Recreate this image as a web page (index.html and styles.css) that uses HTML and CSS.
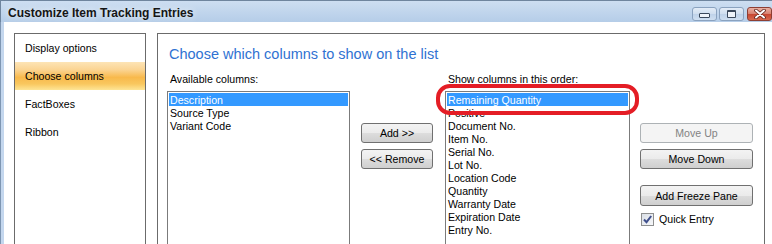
FILE: index.html
```html
<!DOCTYPE html>
<html>
<head>
<meta charset="utf-8">
<title>Customize Item Tracking Entries</title>
<link rel="stylesheet" href="styles.css">
</head>
<body>
<div class="window">
  <div class="titlebar">
    <span class="title">Customize Item Tracking Entries</span>
    <div class="caption-buttons">
      <span class="cbtn cbtn-min"><span class="min-glyph"></span></span>
      <span class="cbtn cbtn-max"><span class="max-glyph"></span></span>
      <span class="cbtn cbtn-close">
        <svg width="12" height="10" viewBox="0 0 12 10">
          <path d="M2 1.5 L10 8.5 M10 1.5 L2 8.5" stroke="#5b2219" stroke-width="3.6" stroke-linecap="round"/>
          <path d="M2 1.5 L10 8.5 M10 1.5 L2 8.5" stroke="#ffffff" stroke-width="2" stroke-linecap="round"/>
        </svg>
      </span>
    </div>
  </div>
  <div class="client">
    <ul class="nav">
      <li class="nav-item">Display options</li>
      <li class="nav-item active">Choose columns</li>
      <li class="nav-item">FactBoxes</li>
      <li class="nav-item">Ribbon</li>
    </ul>
    <section class="panel">
      <h1 class="heading">Choose which columns to show on the list</h1>
      <div class="columns">
        <div class="col col-avail">
          <div class="label">Available columns:</div>
          <div class="listbox">
            <div class="item selected">Description</div>
            <div class="item">Source Type</div>
            <div class="item">Variant Code</div>
          </div>
        </div>
        <div class="col col-mid">
          <button class="btn">Add &gt;&gt;</button>
          <button class="btn">&lt;&lt; Remove</button>
        </div>
        <div class="col col-order">
          <div class="label">Show columns in this order:</div>
          <div class="listbox listbox-order">
            <div class="item selected">Remaining Quantity</div>
            <div class="item">Positive</div>
            <div class="item">Document No.</div>
            <div class="item">Item No.</div>
            <div class="item">Serial No.</div>
            <div class="item">Lot No.</div>
            <div class="item">Location Code</div>
            <div class="item">Quantity</div>
            <div class="item">Warranty Date</div>
            <div class="item">Expiration Date</div>
            <div class="item">Entry No.</div>
          </div>
          <div class="ring"></div>
        </div>
        <div class="col col-actions">
          <button class="btn" disabled>Move Up</button>
          <button class="btn">Move Down</button>
          <button class="btn btn-freeze">Add Freeze Pane</button>
          <label class="check-row">
            <span class="checkbox">
              <svg width="11" height="11" viewBox="0 0 11 11">
                <path d="M2 5.5 L4.5 8.2 L9.2 2" fill="none" stroke="#3f4f8c" stroke-width="2"/>
              </svg>
            </span>
            <span class="check-label">Quick Entry</span>
          </label>
        </div>
      </div>
    </section>
  </div>
</div>
</body>
</html>
```

FILE: styles.css
```css
html, body {
  margin: 0;
  padding: 0;
}
body {
  width: 772px;
  height: 244px;
  overflow: hidden;
  background: #ffffff;
  font-family: "Liberation Sans", Arial, sans-serif;
  font-size: 10.6px;
  color: #000;
}
.window {
  width: 772px;
  height: 244px;
  overflow: hidden;
}
.titlebar {
  height: 22px;
  box-sizing: border-box;
  border-top: 1px solid #6f859e;
  border-left: 1px solid #6f859e;
  background: linear-gradient(#cddef1, #b5cde8);
  display: flex;
}
.title {
  font-weight: bold;
  font-size: 12px;
  line-height: 16px;
  padding: 4px 0 0 7px;
  color: #151515;
  text-shadow: 0 0 6px rgba(255, 255, 255, 0.9);
  white-space: nowrap;
}
.caption-buttons {
  margin-left: auto;
  display: flex;
  align-items: flex-start;
  padding-top: 6px;
}
.cbtn {
  width: 25px;
  height: 14px;
  box-sizing: border-box;
  border: 1px solid #8aa2bf;
  border-radius: 3px;
  background: linear-gradient(#e3ecf7, #cfdeef 50%, #bed2e9 51%, #cfdff1);
  display: flex;
  align-items: center;
  justify-content: center;
}
.cbtn-min {
  margin-right: 2px;
}
.cbtn-max {
  margin-right: 3px;
}
.cbtn-close {
  border-color: #8d3f34;
  background: linear-gradient(#eab0a3, #d7806d 50%, #c6452f 51%, #d86a4f);
}
.min-glyph {
  width: 11px;
  height: 5px;
  box-sizing: border-box;
  margin-top: 3px;
  border: 1px solid #3a485b;
  border-radius: 1px;
  background: #eef3f9;
}
.max-glyph {
  width: 9px;
  height: 8px;
  box-sizing: border-box;
  border: 1px solid #3a485b;
  border-top-width: 2px;
  border-radius: 1px;
  background: #eef3f9;
}
.client {
  height: 222px;
  box-sizing: border-box;
  display: flex;
  align-items: flex-start;
  border-left: 1px solid #7e96b2;
  box-shadow: inset 3px 0 0 #c4d7ee;
  padding: 11px 0 0 13px;
}
.nav {
  list-style: none;
  margin: 0;
  padding: 0;
  width: 132px;
  height: 250px;
  flex: none;
  box-sizing: border-box;
  border: 1px solid #6b6b6b;
}
.nav-item {
  height: 28px;
  line-height: 28px;
  padding-left: 10px;
  white-space: nowrap;
}
.nav-item.active {
  background: linear-gradient(#fde4b6 0%, #fbd492 28%, #f8b94c 55%, #f9c75e 78%, #fee596 100%);
}
.panel {
  margin-left: 11px;
  width: 608px;
  height: 250px;
  flex: none;
  box-sizing: border-box;
  border: 1px solid #6b6b6b;
  padding: 10px 0 0 9px;
}
.heading {
  margin: 0 0 8px 2px;
  font-size: 14.5px;
  font-weight: normal;
  line-height: 20px;
  color: #2f72d2;
  white-space: nowrap;
}
.columns {
  display: flex;
  align-items: flex-start;
}
.col {
  flex: none;
}
.col-avail {
  width: 183px;
}
.col-mid {
  width: 72px;
  margin-left: 11px;
  padding-top: 51px;
  display: flex;
  flex-direction: column;
  gap: 6px;
}
.col-order {
  width: 185px;
  margin-left: 12px;
  position: relative;
}
.col-actions {
  width: 113px;
  margin-left: 10px;
  padding-top: 51px;
  display: flex;
  flex-direction: column;
  gap: 6px;
}
.label {
  line-height: 15px;
  height: 15px;
  margin: 0 0 4px 3px;
  white-space: nowrap;
}
.listbox {
  height: 200px;
  box-sizing: border-box;
  border: 1px solid #7b7b7b;
  padding: 1px;
}
.item {
  line-height: 15px;
  height: 13px;
  padding-left: 1px;
  white-space: nowrap;
}
.item.selected {
  background: #3399ff;
  color: #ffffff;
}
.ring {
  position: absolute;
  left: -9px;
  top: 12px;
  width: 203px;
  height: 31px;
  box-sizing: border-box;
  border: 4px solid #e41d25;
  border-radius: 14px;
  pointer-events: none;
}
.btn {
  width: 100%;
  height: 20px;
  margin: 0;
  padding: 1px 0 0;
  box-sizing: border-box;
  border: 1px solid #707070;
  border-radius: 3px;
  background: linear-gradient(#f3f3f3, #ebebeb 50%, #dddddd 51%, #cfcfcf);
  font-family: inherit;
  font-size: 10.6px;
  line-height: 17px;
  color: #000;
  white-space: nowrap;
}
.btn:disabled {
  border-color: #adb2b5;
  background: #f4f4f4;
  color: #838383;
}
.btn-freeze {
  margin-top: 10px;
  height: 21px;
}
.check-row {
  display: flex;
  align-items: center;
  margin-top: 1px;
  padding-left: 1px;
  line-height: 13px;
}
.checkbox {
  width: 13px;
  height: 13px;
  box-sizing: border-box;
  border: 1px solid #8e8f8f;
  background: linear-gradient(135deg, #dadfe6, #f7f8fa);
  display: flex;
  align-items: center;
  justify-content: center;
}
.check-label {
  margin-left: 5px;
}
```
